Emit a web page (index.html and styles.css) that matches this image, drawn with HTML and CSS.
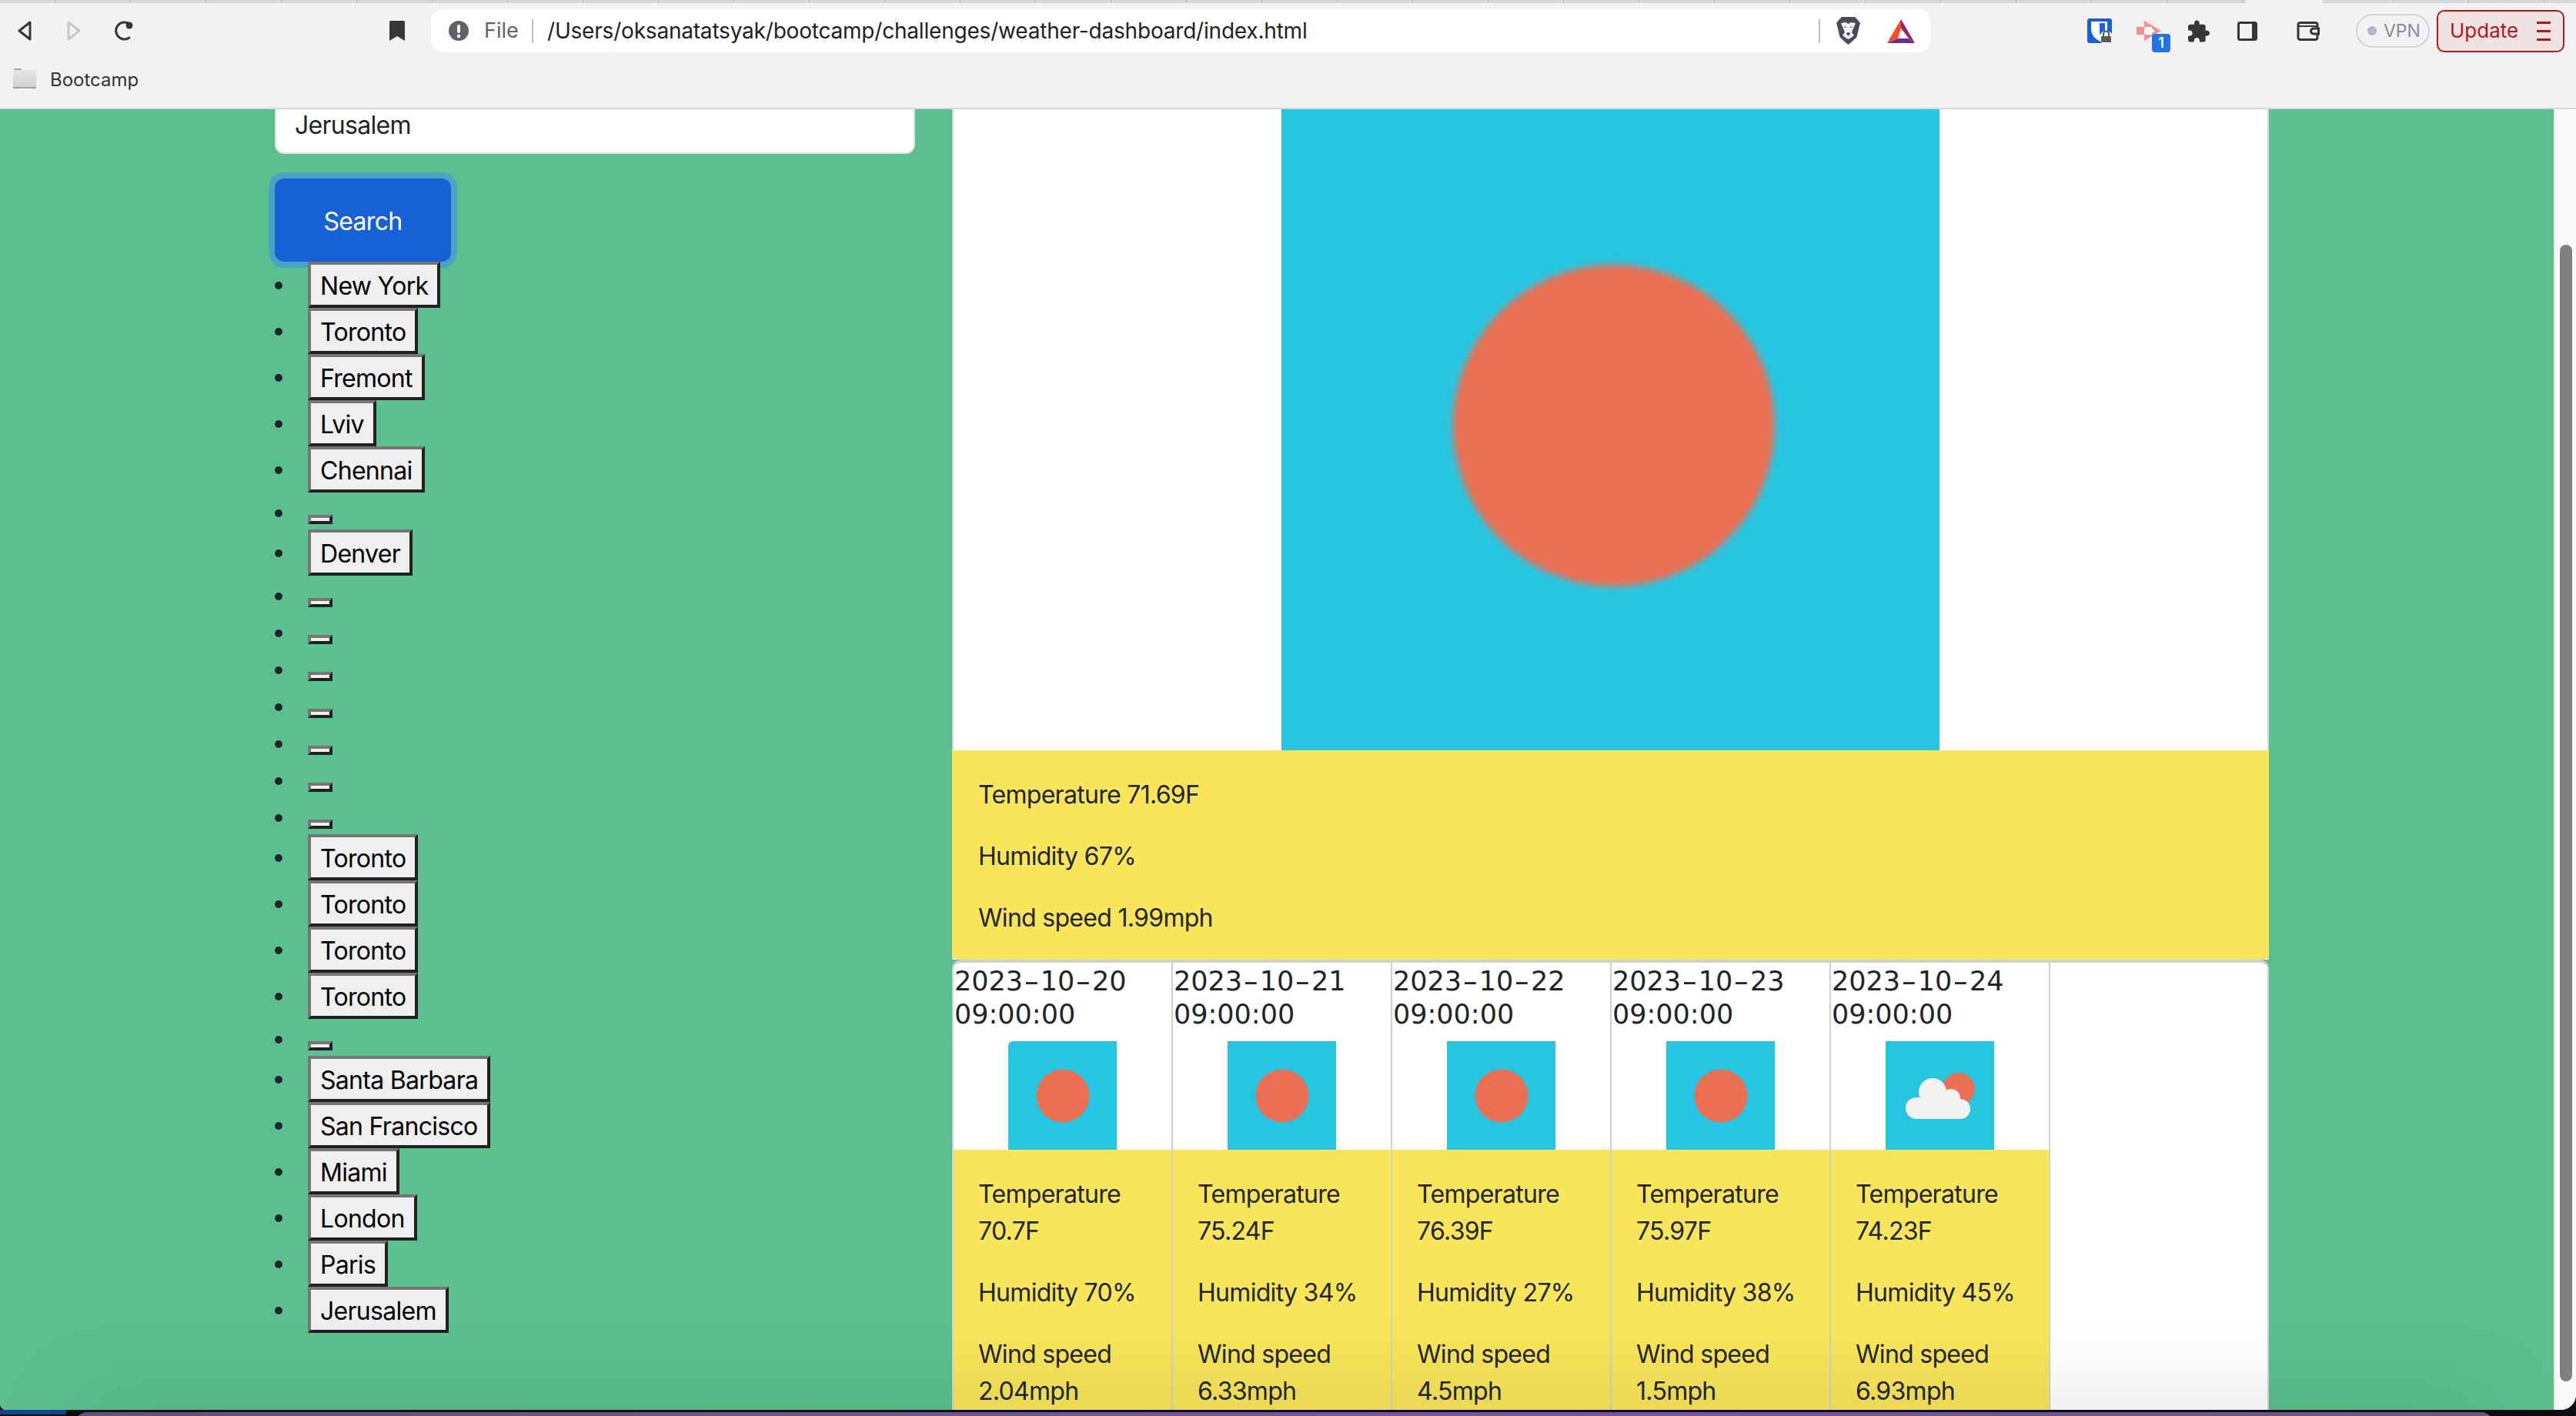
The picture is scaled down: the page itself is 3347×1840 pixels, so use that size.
FILE: index.html
```html
<!DOCTYPE html>
<html lang="en">
<head>
<meta charset="utf-8">
<title>Weather Dashboard</title>
<link rel="stylesheet" href="styles.css">
</head>
<body>
<div class="window">
  <div class="tabstrip"><div class="tab-active"></div></div>
  <header class="toolbar">
    <svg class="ic ic-back" viewBox="0 0 19 26"><path d="M17 2 3 13l14 11z" fill="none" stroke="#33363a" stroke-width="3" stroke-linejoin="round"/></svg>
    <svg class="ic ic-fwd" viewBox="0 0 19 26"><path d="M2 2l14 11L2 24z" fill="none" stroke="#c5c7c9" stroke-width="3" stroke-linejoin="round"/></svg>
    <svg class="ic ic-reload" viewBox="0 0 26 26"><path d="M21 22a11 11 0 1 1 0-18" fill="none" stroke="#33363a" stroke-width="3" stroke-linecap="round"/><circle cx="21" cy="6" r="4.5" fill="#33363a"/></svg>
    <svg class="ic ic-mark" viewBox="0 0 20 26"><path d="M2 0h16a2 2 0 0 1 2 2v24l-10-6-10 6V2a2 2 0 0 1 2-2z" fill="#33363a"/></svg>
    <div class="address">
      <svg class="ic ic-warn" viewBox="0 0 26 26"><circle cx="13" cy="13" r="13" fill="#5f6368"/><rect x="11" y="5" width="4" height="11" rx="2" fill="#fff"/><circle cx="13" cy="20" r="2.2" fill="#fff"/></svg>
      <span class="addr-file">File</span>
      <span class="addr-sep"></span>
      <span class="addr-path">/Users/oksanatatsyak/bootcamp/challenges/weather-dashboard/index.html</span>
      <span class="addr-sep addr-sep-end"></span>
      <svg class="ic ic-lion" viewBox="0 0 31 36"><path d="M7 0h17l3 3 4 5-1.500 5-1 5-2 8-6 6-5 4-5-4-6-6-2-8-1-5L0 8l4-5z" fill="#4a4a5c"/><path d="M6 8l6-1 3.500 2 3.500-2 6 1-3 7-2 5 3 4-4 3-3.500 2-3.500-2-4-3 3-4-2-5z" fill="#f4f4f6"/><path d="M13 14h-3l2-2zM18 14h3l-2-2zM12.500 21l3-1 3 1-3 4z" fill="#4a4a5c"/></svg>
      <svg class="ic ic-bat" viewBox="0 0 36 31"><path d="M18 0 0 31l14-6 4-13z" fill="#ff4724"/><path d="M18 0l18 31-8-6-10-13z" fill="#9e1f63"/><path d="M0 31l14-6h14l8 6z" fill="#662d91"/><path d="M18 12l10 13H14z" fill="#fff"/></svg>
    </div>
    <svg class="ic ic-shield" viewBox="0 0 32 32"><rect width="32" height="32" rx="3" fill="#1a5fd8"/><path d="M5 4h21v17c0 3-3 7-8 9-7-2-13-8-13-17z" fill="#fff"/><rect x="16" y="6" width="7" height="15" fill="#1a5fd8"/><circle cx="24.500" cy="25" r="9" fill="#fff"/><path d="M21 23v-3a3.500 3.500 0 0 1 7 0v3" fill="none" stroke="#5a5a5a" stroke-width="2"/><rect x="18" y="23" width="13" height="8" rx="1" fill="#5a5a5a"/></svg>
    <div class="ext-badged">
      <svg class="ic ic-arrow" viewBox="0 0 32 26"><path d="M10 0l22 13-22 13v-8H0V8h10z" fill="#ff8a8f"/><rect x="10" y="8" width="10" height="10" fill="#fff"/><rect x="20" y="11" width="3" height="4" fill="#fff"/></svg>
      <span class="badge">1</span>
    </div>
    <svg class="ic ic-puzzle" viewBox="2 1 21 21"><path d="M20.500 11H19V7c0-1.100-.9-2-2-2h-4V3.500C13 2.120 11.880 1 10.500 1S8 2.120 8 3.500V5H4c-1.100 0-1.990.9-1.990 2v3.800H3.500c1.490 0 2.700 1.210 2.700 2.700s-1.210 2.700-2.700 2.700H2V20c0 1.100.9 2 2 2h3.800v-1.500c0-1.490 1.210-2.700 2.700-2.700 1.490 0 2.700 1.210 2.700 2.700V22H17c1.100 0 2-.9 2-2v-4h1.500c1.380 0 2.500-1.120 2.500-2.500S21.880 11 20.500 11z" fill="#33363a"/></svg>
    <svg class="ic ic-side" viewBox="0 0 26 25"><rect x="1.500" y="1.500" width="23" height="22" rx="2" fill="none" stroke="#33363a" stroke-width="3"/><rect x="19" y="1" width="6" height="23" fill="#33363a"/></svg>
    <svg class="ic ic-wallet" viewBox="0 0 30 25"><path d="M27 8V4a2.500 2.500 0 0 0-2.500-2.500h-20A2.500 2.500 0 0 0 2 4v17a2.500 2.500 0 0 0 2.500 2.500h20A2.500 2.500 0 0 0 27 21v-4" fill="none" stroke="#33363a" stroke-width="3"/><path d="M2 6h25" stroke="#33363a" stroke-width="2"/><path d="M28.500 9H22a3.500 3.500 0 0 0 0 7h6.500z" fill="#f2f2f2" stroke="#33363a" stroke-width="3"/></svg>
    <div class="vpn"><span class="vpn-dot"></span><span>VPN</span></div>
    <div class="update"><span>Update</span><span class="update-menu"><i></i><i></i><i></i></span></div>
  </header>
  <nav class="bookmarks">
    <svg class="ic ic-folder" viewBox="0 0 30 26"><defs><linearGradient id="fold" x1="0" y1="0" x2="0" y2="1"><stop offset="0" stop-color="#e6e6e6"/><stop offset="1" stop-color="#cfcfcf"/></linearGradient></defs><path d="M1 0h9l3 3H1z" fill="#a8a8a8"/><rect x="0" y="2" width="30" height="24" rx="2" fill="url(#fold)"/><rect x="0" y="24" width="30" height="2" fill="#a2a2a2"/></svg>
    <span>Bootcamp</span>
  </nav>
  <div class="viewport">
    <main class="page">
      <section class="side">
        <input class="city-input" type="text" value="Jerusalem">
        <button class="search-btn" type="button">Search</button>
        <ul class="history">
          <li><button class="city" type="button">New York</button></li>
          <li><button class="city" type="button">Toronto</button></li>
          <li><button class="city" type="button">Fremont</button></li>
          <li><button class="city" type="button">Lviv</button></li>
          <li><button class="city" type="button">Chennai</button></li>
          <li><button class="city" type="button"></button></li>
          <li><button class="city" type="button">Denver</button></li>
          <li><button class="city" type="button"></button></li>
          <li><button class="city" type="button"></button></li>
          <li><button class="city" type="button"></button></li>
          <li><button class="city" type="button"></button></li>
          <li><button class="city" type="button"></button></li>
          <li><button class="city" type="button"></button></li>
          <li><button class="city" type="button"></button></li>
          <li><button class="city" type="button">Toronto</button></li>
          <li><button class="city" type="button">Toronto</button></li>
          <li><button class="city" type="button">Toronto</button></li>
          <li><button class="city" type="button">Toronto</button></li>
          <li><button class="city" type="button"></button></li>
          <li><button class="city" type="button">Santa Barbara</button></li>
          <li><button class="city" type="button">San Francisco</button></li>
          <li><button class="city" type="button">Miami</button></li>
          <li><button class="city" type="button">London</button></li>
          <li><button class="city" type="button">Paris</button></li>
          <li><button class="city" type="button">Jerusalem</button></li>
        </ul>
      </section>
      <section class="weather">
        <article class="today">
          <div class="today-img">
            <svg class="today-icon" viewBox="0 0 855 855"><defs><filter id="soft"><feGaussianBlur stdDeviation="4"/></filter></defs><rect width="855" height="855" fill="#26c6e2"/><circle cx="432" cy="433" r="209" fill="#ea6f53" filter="url(#soft)"/></svg>
          </div>
          <div class="today-body">
            <p>Temperature 71.69F</p>
            <p>Humidity 67%</p>
            <p>Wind speed 1.99mph</p>
          </div>
        </article>
        <div class="forecast">
          <article class="day">
            <h5 class="day-title"><span>2023</span><span class="dash">-</span><span>10</span><span class="dash">-</span><span>20</span> <span>09:00:00</span></h5>
            <svg class="day-icon day-icon-first" viewBox="0 0 141 141"><rect width="141" height="141" fill="#26c6e2"/><circle cx="71" cy="71" r="34.500" fill="#ea6f53"/></svg>
            <div class="day-body"><p>Temperature 70.7F</p><p>Humidity 70%</p><p>Wind speed 2.04mph</p></div>
          </article>
          <article class="day">
            <h5 class="day-title"><span>2023</span><span class="dash">-</span><span>10</span><span class="dash">-</span><span>21</span> <span>09:00:00</span></h5>
            <svg class="day-icon" viewBox="0 0 141 141"><rect width="141" height="141" fill="#26c6e2"/><circle cx="71" cy="71" r="34.500" fill="#ea6f53"/></svg>
            <div class="day-body"><p>Temperature 75.24F</p><p>Humidity 34%</p><p>Wind speed 6.33mph</p></div>
          </article>
          <article class="day">
            <h5 class="day-title"><span>2023</span><span class="dash">-</span><span>10</span><span class="dash">-</span><span>22</span> <span>09:00:00</span></h5>
            <svg class="day-icon" viewBox="0 0 141 141"><rect width="141" height="141" fill="#26c6e2"/><circle cx="71" cy="71" r="34.500" fill="#ea6f53"/></svg>
            <div class="day-body"><p>Temperature 76.39F</p><p>Humidity 27%</p><p>Wind speed 4.5mph</p></div>
          </article>
          <article class="day">
            <h5 class="day-title"><span>2023</span><span class="dash">-</span><span>10</span><span class="dash">-</span><span>23</span> <span>09:00:00</span></h5>
            <svg class="day-icon" viewBox="0 0 141 141"><rect width="141" height="141" fill="#26c6e2"/><circle cx="71" cy="71" r="34.500" fill="#ea6f53"/></svg>
            <div class="day-body"><p>Temperature 75.97F</p><p>Humidity 38%</p><p>Wind speed 1.5mph</p></div>
          </article>
          <article class="day">
            <h5 class="day-title"><span>2023</span><span class="dash">-</span><span>10</span><span class="dash">-</span><span>24</span> <span>09:00:00</span></h5>
            <svg class="day-icon" viewBox="0 0 141 141"><rect width="141" height="141" fill="#26c6e2"/><circle cx="95" cy="62" r="21" fill="#ea6f53"/><g fill="#f2f2f2"><circle cx="61" cy="66" r="18"/><circle cx="85" cy="74" r="12"/><circle cx="40" cy="87" r="14"/><circle cx="97" cy="88" r="13"/><rect x="38" y="76" width="60" height="25"/></g></svg>
            <div class="day-body"><p>Temperature 74.23F</p><p>Humidity 45%</p><p>Wind speed 6.93mph</p></div>
          </article>
        </div>
      </section>
    </main>
    <aside class="scrollbar"><div class="scroll-thumb"></div></aside>
  </div>
</div>
<div class="desk-blue"></div>
<div class="dock"></div>
</body>
</html>
```
FILE: styles.css
```css
* { box-sizing: border-box; }
html, body { margin: 0; height: 100%; }
body {
  position: relative;
  height: 1840px;
  overflow: hidden;
  background: #0e0d12;
  font-family: "Inter", "Liberation Sans", sans-serif;
  font-size: 32px;
  line-height: 48px;
  color: #212529;
}
.window {
  height: 1832px;
  display: flex;
  flex-direction: column;
  overflow: hidden;
  border-radius: 0 0 20px 8px;
  background: #f2f2f2;
  position: relative;
  z-index: 1;
}
.tabstrip {
  height: 4px;
  flex: none;
  background: repeating-linear-gradient(90deg, #d5d8db 0 97px, #b4b8bc 97px 98px);
  background-position: -26px 0;
}
.tab-active { width: 100px; height: 4px; margin-left: 2918px; background: #f2f2f2; }

.toolbar {
  height: 64px;
  flex: none;
  display: flex;
  align-items: center;
  padding-top: 8px;
  color: #33363a;
}
.ic { display: block; flex: none; }
.ic-back { width: 19px; height: 26px; margin-left: 22px; }
.ic-fwd { width: 19px; height: 26px; margin-left: 46px; }
.ic-reload { width: 26px; height: 26px; margin-left: 41px; }
.ic-mark { width: 20px; height: 26px; margin-left: 333px; }
.address {
  width: 1948px;
  height: 56px;
  margin-left: 34px;
  padding-left: 23px;
  display: flex;
  align-items: center;
  flex: none;
  background: #fff;
  border-radius: 16px;
  font-size: 28px;
}
.ic-warn { width: 26px; height: 26px; }
.addr-file { margin-left: 20px; color: #5f6368; width: 44px; font-size: 27px; }
.addr-sep { width: 2px; height: 31px; margin-left: 18px; background: #bdbdbd; flex: none; }
.addr-path { margin-left: 18px; color: #202124; width: 1652px; flex: none; white-space: nowrap; letter-spacing: -.2px; }
.addr-sep-end { margin-left: 0; }
.ic-lion { width: 31px; height: 36px; margin-left: 21px; }
.ic-bat { width: 36px; height: 31px; margin-left: 35px; }
.ic-shield { width: 32px; height: 32px; margin-left: 204px; }
.ext-badged { position: relative; margin-left: 32px; flex: none; }
.ic-arrow { width: 32px; height: 26px; }
.badge {
  position: absolute;
  left: 20px;
  top: 17px;
  width: 24px;
  height: 24px;
  border-radius: 4px;
  background: #2274e6;
  color: #fff;
  font-size: 18px;
  font-weight: 600;
  line-height: 24px;
  text-align: center;
}
.ic-puzzle { width: 28px; height: 29px; margin-left: 35px; }
.ic-side { width: 26px; height: 25px; margin-left: 36px; }
.ic-wallet { width: 30px; height: 25px; margin-left: 51px; }
.vpn {
  width: 96px;
  height: 44px;
  margin-left: 47px;
  flex: none;
  display: flex;
  align-items: center;
  gap: 9px;
  padding-left: 13px;
  border: 2px solid #cfd3d7;
  border-radius: 22px;
  color: #868e96;
  font-size: 23px;
}
.vpn-dot { width: 12px; height: 12px; border-radius: 50%; background: #b0b5c9; flex: none; }
.update {
  width: 166px;
  height: 55px;
  margin-left: 9px;
  flex: none;
  display: flex;
  align-items: center;
  padding-left: 15px;
  border: 2px solid #b5161e;
  border-radius: 10px;
  background: #efe3e2;
  color: #b5161e;
  font-size: 26px;
}
.update-menu { display: flex; flex-direction: column; gap: 8px; margin-left: 24px; }
.update-menu i { display: block; width: 18px; height: 3px; background: #b5161e; }

.bookmarks {
  height: 74px;
  flex: none;
  display: flex;
  align-items: center;
  padding: 0 0 4px 17px;
  border-bottom: 2px solid #d5d9dc;
  font-size: 24px;
  color: #333;
}
.bookmarks span { padding-top: 3px; }
.ic-folder { width: 30px; height: 26px; margin-right: 18px; }

.viewport { flex: 1; min-height: 0; display: flex; overflow: hidden; }
.page {
  flex: 1;
  min-width: 0;
  display: grid;
  grid-template-columns: 832px 1711px;
  column-gap: 48px;
  align-items: start;
  align-content: start;
  padding-left: 357px;
  margin-top: -22px;
  background: #5bc08e;
  letter-spacing: -.7px;
}
.scrollbar {
  width: 29px;
  flex: none;
  padding: 176px 0 0 6px;
  background: #fafafa;
  border-left: 2px solid #e8e8e8;
}
.scroll-thumb { width: 16px; height: 1477px; border-radius: 8px; background: #808080; }

.side { padding-top: 4px; }
.city-input {
  display: block;
  width: 100%;
  height: 76px;
  padding: 12px 24px;
  border: 2px solid #dee2e6;
  border-radius: 12px;
  background: #fff;
  color: #212529;
  font: inherit;
  letter-spacing: inherit;
  outline: none;
}
.search-btn {
  display: block;
  width: 229px;
  height: 108px;
  margin-top: 32px;
  padding: 4px 0 0;
  border: 0;
  border-radius: 12px;
  background: #1761d6;
  box-shadow: 0 0 0 8px #4ba3c4;
  color: #fff;
  font: inherit;
  letter-spacing: inherit;
}
.history { margin: 0; padding: 0 0 0 43px; list-style: none; }
.history li::before {
  content: "";
  display: inline-block;
  width: 10px;
  height: 10px;
  margin: 0 33px 0 -43px;
  border-radius: 50%;
  background: #212529;
  vertical-align: 7px;
}
.history li:has(.city:empty)::before { vertical-align: 3px; }
.city {
  padding: 4px 12px 0;
  border-style: solid;
  border-width: 4px;
  border-color: #767676 #212121 #212121 #767676;
  border-radius: 0;
  background: #efefef;
  color: #000;
  font: inherit;
  letter-spacing: inherit;
}
.city:empty { padding: 2px 12px; }

.today { border-inline: 2px solid #d8d8d8; background: #fff; }
.today-img { display: flex; justify-content: center; }
.today-icon { display: block; width: 855px; height: 855px; }
.today-body {
  margin-inline: -2px;
  padding: 34px 34px 30px;
  background: #f9e559;
  border-radius: 0 0 8px 8px;
}
.today-body p, .day-body p { margin: 0 0 32px; }
.today-body p:last-child, .day-body p:last-child { margin-bottom: 0; }
.forecast {
  display: flex;
  height: 700px;
  background: #fff;
  border: 2px solid #d4d4d4;
  border-top: 4px solid #d0d0d0;
  border-radius: 12px 12px 0 0;
  overflow: hidden;
}
.day { width: 285px; flex: none; border-right: 2px solid #cfcfcf; }
.day-title {
  margin: 0 0 16px;
  padding: 3px 0 0 1px;
  height: 86px;
  font-family: "DejaVu Sans", sans-serif;
  font-size: 35px;
  font-weight: 400;
  line-height: 43px;
  letter-spacing: 0;
}
.dash { display: inline-block; margin: 0 5px; transform: scaleX(1.6); }
.day-icon { display: block; width: 141px; height: 141px; margin: 0 auto; }
.day-icon-first { border-top-left-radius: 6px; }
.day-body { padding: 34px 32px 32px; background: #f9e559; height: 400px; }

.desk-blue { position: absolute; left: 0; top: 1832px; width: 86px; height: 6px; background: #10478a; }
.dock {
  position: absolute;
  z-index: 2;
  left: 96px;
  right: 106px;
  top: 1835px;
  height: 40px;
  border-radius: 18px 18px 0 0;
  background: linear-gradient(90deg, #5f5478, #7d549c 60%, #6a5484);
  box-shadow: 0 0 120px rgba(0, 0, 0, .22);
}
```
